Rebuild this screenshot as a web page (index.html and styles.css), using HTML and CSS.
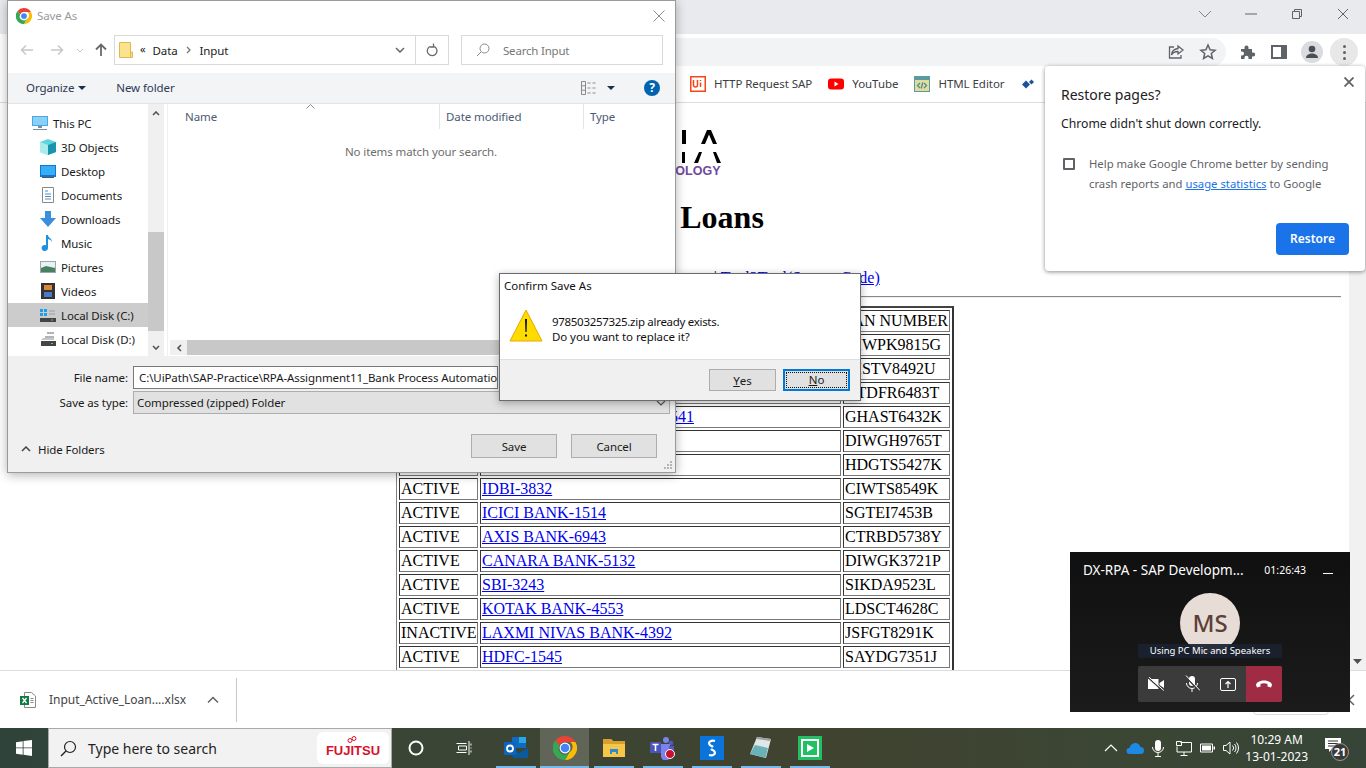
FILE: index.html
```html
<!DOCTYPE html>
<html>
  <head>
    <title>Active Loans</title>
    <link rel="stylesheet" href="styles.css">
  </head>
  <body>
    <div class="tabstrip">
      <svg class="winctl" width="16" height="16" viewBox="0 0 16 16"><path d="M2 5l6 6 6-6" fill="none" stroke="#80868b"/></svg>
      <svg class="winctl" width="16" height="16" viewBox="0 0 16 16"><path d="M2 8h12" stroke="#5f6368"/></svg>
      <svg class="winctl" width="16" height="16" viewBox="0 0 16 16"><path d="M3.500 5.500h7v7h-7zM5.500 5V3.500h7v7H11" fill="none" stroke="#5f6368"/></svg>
      <svg class="winctl" width="16" height="16" viewBox="0 0 16 16"><path d="M3 3l10 10M13 3L3 13" stroke="#5f6368"/></svg>
    </div>

    <div class="toolbar">
      <div class="omnibox">
        <svg width="18" height="18" viewBox="0 0 18 18"><path d="M11 3l5 4-5 4V8.500C7 8.500 5.500 10 4.500 12c.2-3.500 2.500-6 6.500-6.500zM7 4H2.500v11H14v-3" fill="none" stroke="#5f6368" stroke-width="1.300"/></svg>
        <svg width="18" height="18" viewBox="0 0 18 18"><path d="M9 2l2.100 4.700 5 .5-3.800 3.300 1.100 5L9 12.900l-4.400 2.600 1.100-5L1.900 7.200l5-.5z" fill="none" stroke="#5f6368" stroke-width="1.500"/></svg>
      </div>
      <div class="toolbar-icons">
        <svg width="18" height="18" viewBox="0 0 18 18"><path d="M2 6h3.500V4.500a2 2 0 014 0V6H13v3.500h1.200a2 2 0 010 4H13V16H9.500v-1.200a2 2 0 00-4 0V16H2v-3.500h1a2 2 0 000-4H2z" fill="#5f6368"/></svg>
        <svg width="16" height="14" viewBox="0 0 16 14"><path d="M1 1h14v12H1z" fill="#fff" stroke="#5f6368" stroke-width="2"/><path d="M10 1h5v12h-5z" fill="#5f6368"/></svg>
        <span class="avatar">
          <svg width="14" height="14" viewBox="0 0 14 14"><circle cx="7" cy="4" r="3.300" fill="#4a4f57"/><path d="M1 13c0-3 3-4.500 6-4.500s6 1.500 6 4.500z" fill="#4a4f57"/></svg>
        </span>
        <span class="menu-btn"><i></i><i></i><i></i></span>
      </div>
    </div>

    <div class="bookmarks">
      <a class="mark">
        <svg width="16" height="16" viewBox="0 0 16 16"><path d="M0 0h16v16H0z" fill="#fa4616"/><path d="M1.500 1.500h13v13h-13z" fill="#fff"/><path d="M3.500 4v5a2 2 0 004 0V4M10.500 4v1M10.500 6.500V11" fill="none" stroke="#fa4616" stroke-width="1.500"/></svg>
        HTTP Request SAP
      </a>
      <a class="mark">
        <svg width="16" height="16" viewBox="0 0 16 16"><rect y="2.500" width="16" height="11" rx="3" fill="#f00"/><path d="M6.500 5.500l4 2.500-4 2.500z" fill="#fff"/></svg>
        YouTube
      </a>
      <a class="mark">
        <svg width="16" height="16" viewBox="0 0 16 16"><path d="M0 0h16v16H0z" fill="#5b9aa0"/><path d="M1 4h14v11H1z" fill="#e2dc9c"/><path d="M6 7L3.500 9.500 6 12M10 7l2.500 2.500L10 12M8.800 6.500l-1.600 6" fill="none" stroke="#4e8f91" stroke-width="1.300"/></svg>
        HTML Editor
      </a>
      <svg width="14" height="14" viewBox="0 0 14 14"><path d="M5 3.500L9 7.500 5 11.500 1 7.500z" fill="#1c4f9c"/><path d="M10.500 2.500l2.500 2.500-2.500 2.500L8 5z" fill="#1c4f9c"/></svg>
    </div>

    <div class="viewport">
      <div class="page">
        <div class="logo">
          <svg width="92" height="33" viewBox="0 0 92 33">
            <path d="M53 0h4v14h-4zM72 14l6-14h4l6 14h-4l-4-9.500-4 9.500z" fill="#000"/>
            <path d="M53 22h3v11h-3zM65 33l5-11h3l-4 11zM84 22h3l5 11h-4z" fill="#000"/>
          </svg>
          <div class="logo-sub">TECHNOLOGY</div>
        </div>
        <h1>Active Loans</h1>
        <div class="links"><a>Home</a> | <a>Documentation</a> | <a>Test Datasets</a> | <a>Tool2Tool(Source Code)</a></div>
        <hr>
        <table class="loans">
          <tr><td class="c-status">STATUS</td><td class="c-name">BANK</td><td class="c-pan">PAN NUMBER</td></tr>
          <tr><td>ACTIVE</td><td><a>SBI-8241</a></td><td>DIWPK9815G</td></tr>
          <tr><td>ACTIVE</td><td><a>PNB-2241</a></td><td>DISTV8492U</td></tr>
          <tr><td>ACTIVE</td><td><a>HDFC-7719</a></td><td>DTDFR6483T</td></tr>
          <tr><td>ACTIVE</td><td><a>UNION BANK OF INDIA-6541</a></td><td>GHAST6432K</td></tr>
          <tr><td>ACTIVE</td><td><a>YES BANK-2207</a></td><td>DIWGH9765T</td></tr>
          <tr><td>ACTIVE</td><td><a>UCO BANK-6183</a></td><td>HDGTS5427K</td></tr>
          <tr><td>ACTIVE</td><td><a>IDBI-3832</a></td><td>CIWTS8549K</td></tr>
          <tr><td>ACTIVE</td><td><a>ICICI BANK-1514</a></td><td>SGTEI7453B</td></tr>
          <tr><td>ACTIVE</td><td><a>AXIS BANK-6943</a></td><td>CTRBD5738Y</td></tr>
          <tr><td>ACTIVE</td><td><a>CANARA BANK-5132</a></td><td>DIWGK3721P</td></tr>
          <tr><td>ACTIVE</td><td><a>SBI-3243</a></td><td>SIKDA9523L</td></tr>
          <tr><td>ACTIVE</td><td><a>KOTAK BANK-4553</a></td><td>LDSCT4628C</td></tr>
          <tr><td>INACTIVE</td><td><a>LAXMI NIVAS BANK-4392</a></td><td>JSFGT8291K</td></tr>
          <tr><td>ACTIVE</td><td><a>HDFC-1545</a></td><td>SAYDG7351J</td></tr>
          <tr><td>ACTIVE</td><td><a>IDBI-7021</a></td><td>KLMNO4412R</td></tr>
        </table>
      </div>
      <div class="page-scroll">
        <svg width="9" height="5" viewBox="0 0 9 5"><path d="M0 0h9L4.500 5z" fill="#505050"/></svg>
      </div>
    </div>

    <div class="shelf">
      <div class="shelf-item">
        <svg width="16" height="16" viewBox="0 0 16 16"><path d="M4.500 .5h7l4 3.500v11.500h-11z" fill="#fff" stroke="#8a8a8a"/><path d="M0 4h9v9H0z" fill="#107c41"/><path d="M2.500 6l4 5M6.500 6l-4 5" stroke="#fff" stroke-width="1.300"/><path d="M10.500 6.500h3M10.500 8.500h3M10.500 10.500h3" stroke="#8a8a8a"/></svg>
        <span class="shelf-name">Input_Active_Loan....xlsx</span>
        <svg width="12" height="8" viewBox="0 0 12 8"><path d="M1 6.500l5-5 5 5" fill="none" stroke="#5f6368" stroke-width="1.500"/></svg>
      </div>
      <div class="shelf-right">
        <span class="show-all"></span>
        <svg width="12" height="12" viewBox="0 0 12 12"><path d="M1 1l10 10M11 1L1 11" stroke="#5f6368" stroke-width="1.500"/></svg>
      </div>
    </div>

    <div class="taskbar">
      <div class="start">
        <svg width="16" height="16" viewBox="0 0 16 16"><path d="M0 2.200l6.700-1V7.500H0zM7.500 1.100L16 0v7.500H7.500zM0 8.300h6.700v6.500l-6.700-1zM7.500 8.300H16V16l-8.500-1.200z" fill="#fff"/></svg>
      </div>
      <div class="task-search">
        <svg width="17" height="17" viewBox="0 0 17 17"><circle cx="10" cy="7" r="5.500" fill="none" stroke="#222" stroke-width="1.200"/><path d="M6 11l-5 5" stroke="#222" stroke-width="1.400"/></svg>
        <span class="task-search-text">Type here to search</span>
        <span class="fujitsu">
          <svg class="fujitsu-loop" width="10" height="7" viewBox="0 0 10 7"><circle cx="3" cy="4.500" r="2" fill="none" stroke="#d8102c"/><circle cx="7" cy="2.500" r="2" fill="none" stroke="#d8102c"/></svg>
          FUJITSU
        </span>
      </div>
      <div class="task-btn"><svg width="16" height="16" viewBox="0 0 16 16"><circle cx="8" cy="8" r="6.500" fill="none" stroke="#fff" stroke-width="2"/></svg></div>
      <div class="task-btn"><svg width="16" height="16" viewBox="0 0 16 16"><path d="M.5 3.500h10M.5 12.500h10M2.500 6h8v4h-8z" fill="none" stroke="#fff"/><path d="M13 1v14M15 3.500v2M15 7.500v1M15 10.500v2" stroke="#fff"/></svg></div>
      <div class="apps">
        <div class="app">
          <svg width="24" height="24" viewBox="0 0 24 24"><path d="M8 1h14v11H8z" fill="#0f6cbd"/><path d="M15 1h7v6h-7z" fill="#28a8ea"/><path d="M8 12l7 5 9-5v10H9z" fill="#0a5aa0"/><path d="M0 6h12v13H0z" fill="#0a64c0"/><circle cx="6" cy="12.500" r="3" fill="none" stroke="#fff" stroke-width="1.800"/></svg>
        </div>
        <div class="app app-active">
          <svg width="24" height="24" viewBox="0 0 24 24">
            <path d="M12 0a12 12 0 0110.400 6H12a6 6 0 00-5.600 3.700L2.400 4.400A12 12 0 0112 0z" fill="#ea4335"/>
            <path d="M22.400 6A12 12 0 0112 24l4.600-8a6 6 0 00.600-10z" fill="#fbbc04"/>
            <path d="M2.400 4.400A12 12 0 0012 24l4.600-8a6 6 0 01-10.200-6.300z" fill="#34a853"/>
            <circle cx="12" cy="12" r="5.400" fill="#fff"/><circle cx="12" cy="12" r="4.300" fill="#4285f4"/>
          </svg>
        </div>
        <div class="app">
          <svg width="24" height="22" viewBox="0 0 24 22"><path d="M1 2h8l2 2h12v16H1z" fill="#f5c648"/><path d="M1 2h8l2 2h12v3H1z" fill="#d69f2e"/><path d="M8 12h8v5h-2v-2h-4v2H8z" fill="#2f88d0"/></svg>
        </div>
        <div class="app">
          <svg width="26" height="24" viewBox="0 0 26 24"><circle cx="16" cy="4" r="3" fill="#7b83eb"/><circle cx="21" cy="7" r="2.300" fill="#5059c9"/><path d="M11 8h9v12a4 4 0 01-9 0z" fill="#7b83eb"/><path d="M19 10h5v7h-5z" fill="#5059c9"/><path d="M0 6h11v11H0z" fill="#4b53bc"/><path d="M2.500 8.500h6M5.500 8.500V15" stroke="#fff" stroke-width="1.600"/><circle cx="20" cy="18" r="4.500" fill="#c4122f" stroke="#fff"/></svg>
        </div>
        <div class="app">
          <svg width="24" height="24" viewBox="0 0 24 24"><path d="M0 0h24v24H0z" fill="#0a74da"/><path d="M15 5c-4-1-7 1-5.500 3.500.8 1.300 2.500 1.500 3.500 2.500M9 19c4 1 7-1 5.500-3.500-.8-1.300-2.500-1.500-3.500-2.500" fill="none" stroke="#fff" stroke-width="2.200"/></svg>
        </div>
        <div class="app">
          <svg width="24" height="24" viewBox="0 0 24 24"><path d="M8 1l14 2-5 19L1 18z" fill="#dfe7e8"/><path d="M6 9l13 3-2.500 10L1 18z" fill="#6ab2b8"/><path d="M8 1l14 2-.5 2L7.500 3z" fill="#9e9e9e"/></svg>
        </div>
        <div class="app">
          <svg width="24" height="24" viewBox="0 0 24 24"><path d="M0 0h24v24H0z" fill="#21c063"/><path d="M3 3h18v18H3z" fill="#fff"/><path d="M5 5h14v14H5z" fill="#21c063"/><path d="M9 8l7 4-7 4z" fill="#fff"/></svg>
        </div>
      </div>
      <div class="tray">
        <svg width="14" height="14" viewBox="0 0 14 14"><path d="M1 10l6-6 6 6" fill="none" stroke="#fff" stroke-width="1.200"/></svg>
        <svg width="18" height="12" viewBox="0 0 18 12"><path d="M3.500 12a3 3 0 010-6c.5-3 3-5 6-5 2.500 0 4 1.500 5 4a3.500 3.500 0 010 7z" fill="#1e88e5"/></svg>
        <svg class="tray-mic" width="12" height="17" viewBox="0 0 12 17"><rect x="3" y="0" width="6" height="11" rx="3" fill="#fff"/><path d="M.5 7a5.500 5.500 0 0011 0M6 13v3M3 16.500h6" fill="none" stroke="#fff"/></svg>
        <svg width="16" height="15" viewBox="0 0 16 15"><path d="M4.500 1.500H15.500V11H1V5.500M8 11v3M4.500 14.500h7" fill="none" stroke="#fff"/><path d="M.5.500h5v4h-5z" fill="none" stroke="#fff"/></svg>
        <svg width="15" height="10" viewBox="0 0 15 10"><path d="M.5 1h12v8H.5z" fill="none" stroke="#fff"/><path d="M2 2.500h9v5H2zM13.500 3.500H15v3h-1.500z" fill="#fff"/></svg>
        <svg width="17" height="14" viewBox="0 0 17 14"><path d="M.5 4.500h2.500L7 1v12L3 9.500H.5zM9.500 4.500a3.500 3.500 0 010 5M11.500 3a6 6 0 010 8M13.500 1.500a8.500 8.500 0 010 11" fill="none" stroke="#fff"/></svg>
        <div class="clock"><span>10:29 AM</span><span>13-01-2023</span></div>
        <div class="notify">
          <svg width="16" height="14" viewBox="0 0 16 14"><path d="M0 0h16v11H7l-3 3v-3H0z" fill="#fff"/><path d="M3 3h10M3 5.500h10M3 8h7" stroke="#333"/></svg>
          <span class="notify-count">21</span>
        </div>
      </div>
    </div>

    <div class="save-as">
      <div class="dlg-title">
        <svg width="16" height="16" viewBox="0 0 24 24">
          <path d="M12 0a12 12 0 0110.400 6H12a6 6 0 00-5.600 3.700L2.400 4.400A12 12 0 0112 0z" fill="#ea4335"/>
          <path d="M22.400 6A12 12 0 0112 24l4.600-8a6 6 0 00.600-10z" fill="#fbbc04"/>
          <path d="M2.400 4.400A12 12 0 0012 24l4.600-8a6 6 0 01-10.200-6.300z" fill="#34a853"/>
          <circle cx="12" cy="12" r="5.400" fill="#fff"/><circle cx="12" cy="12" r="4.300" fill="#4285f4"/>
        </svg>
        <span class="dlg-title-text">Save As</span>
        <svg class="dlg-close" width="12" height="12" viewBox="0 0 12 12"><path d="M.5.500l11 11M11.500.500l-11 11" stroke="#8a8a8a"/></svg>
      </div>

      <div class="nav-row">
        <div class="nav-arrows">
          <svg width="14" height="12" viewBox="0 0 14 12"><path d="M13 6H1.500M6 1.500L1.500 6 6 10.500" fill="none" stroke="#c8c8c8" stroke-width="1.500"/></svg>
          <svg width="14" height="12" viewBox="0 0 14 12"><path d="M1 6h11.500M8 1.500L12.500 6 8 10.500" fill="none" stroke="#c8c8c8" stroke-width="1.500"/></svg>
          <svg width="8" height="5" viewBox="0 0 8 5"><path d="M1 1l3 3 3-3" fill="none" stroke="#c8c8c8"/></svg>
          <svg width="12" height="14" viewBox="0 0 12 14"><path d="M6 13V1.500M1 6.500l5-5 5 5" fill="none" stroke="#6a6a6a" stroke-width="1.800"/></svg>
        </div>
        <div class="addr">
          <svg width="14" height="16" viewBox="0 0 14 16"><path d="M.5.500h11v15H.5z" fill="#fbe38e" stroke="#e0b84c"/><path d="M11.500 10h2v5.500h-2z" fill="#fbe38e" stroke="#e0b84c"/></svg>
          <span class="addr-quote">«</span>
          <span>Data</span>
          <svg width="6" height="8" viewBox="0 0 6 8"><path d="M1 1l3 3-3 3" fill="none" stroke="#777" stroke-width="1.300"/></svg>
          <span>Input</span>
          <svg class="addr-drop" width="10" height="6" viewBox="0 0 10 6"><path d="M1 1l4 4 4-4" fill="none" stroke="#666" stroke-width="1.500"/></svg>
          <span class="addr-refresh">
            <svg width="12" height="14" viewBox="0 0 12 14"><path d="M4 3.500a4.800 4.800 0 103.800-.2M7.500 .5v3.500H4" fill="none" stroke="#6a6a6a" stroke-width="1.300"/></svg>
          </span>
        </div>
        <div class="search-box">
          <svg width="14" height="14" viewBox="0 0 14 14"><circle cx="8.500" cy="5.500" r="4.500" fill="none" stroke="#8a8a8a"/><path d="M5 9l-4 4" stroke="#8a8a8a"/></svg>
          <span>Search Input</span>
        </div>
      </div>

      <div class="cmd-row">
        <span class="cmd">Organize <svg width="8" height="4" viewBox="0 0 8 4"><path d="M0 0h8L4 4z" fill="#1e2c50"/></svg></span>
        <span class="cmd cmd-new">New folder</span>
        <svg class="view-ico" width="16" height="14" viewBox="0 0 16 14"><path d="M.5.500h4v13h-4zM.5 4.800h4M.5 9.200h4M6.500 2h3M11.500 2h3M6.500 7h3M11.500 7h3M6.500 12h3M11.500 12h3" fill="none" stroke="#8a8a8a"/></svg>
        <svg width="8" height="4" viewBox="0 0 8 4"><path d="M0 0h8L4 4z" fill="#1e2c50"/></svg>
        <span class="help">?</span>
      </div>

      <div class="browse">
        <div class="tree">
          <div class="tree-item tree-root">
            <svg width="16" height="14" viewBox="0 0 16 14"><path d="M0 0h16v10H0z" fill="#4aa8e8"/><path d="M1 1h14v8H1z" fill="#8ad0f8"/><path d="M6 10h4v2H6zM1 13h14v1H1z" fill="#7a8ea0"/></svg>
            This PC
          </div>
          <div class="tree-item">
            <svg width="16" height="16" viewBox="0 0 16 16"><path d="M8 0l8 3v10l-8 3-8-3V3z" fill="#5dd5e0"/><path d="M8 6l8-3v10l-8 3z" fill="#1a94ad"/><path d="M0 3l8 3v10l-8-3z" fill="#a8ecf0"/></svg>
            3D Objects
          </div>
          <div class="tree-item">
            <svg width="16" height="13" viewBox="0 0 16 13"><path d="M0 0h16v12H0z" fill="#0c78d8"/><path d="M1 1h14v9H1z" fill="#3aaef5"/><path d="M2 12h12v1H2z" fill="#555"/></svg>
            Desktop
          </div>
          <div class="tree-item">
            <svg width="16" height="16" viewBox="0 0 16 16"><path d="M2.500.5h11v15h-11z" fill="#fff" stroke="#888"/><path d="M5 4h3M5 7h6M5 9.500h6M5 12h6" stroke="#4a90c8"/></svg>
            Documents
          </div>
          <div class="tree-item">
            <svg width="16" height="16" viewBox="0 0 16 16"><path d="M5 0h6v7h5l-8 9-8-9h5z" fill="#3a8fdc"/></svg>
            Downloads
          </div>
          <div class="tree-item">
            <svg width="16" height="16" viewBox="0 0 16 16"><path d="M6 0h2c0 3 4 3 4 7-1-2-2-2.500-4-3v9a3.200 3 0 11-2-2.800z" fill="#1e90e0"/></svg>
            Music
          </div>
          <div class="tree-item">
            <svg width="16" height="12" viewBox="0 0 16 12"><path d="M0 0h16v12H0z" fill="#9aa8ae"/><path d="M1 1h14v10H1z" fill="#e8f2f5"/><path d="M1 7l5-2 9 2v4H1z" fill="#4a8060"/></svg>
            Pictures
          </div>
          <div class="tree-item">
            <svg width="16" height="16" viewBox="0 0 16 16"><path d="M1 0h14v16H1z" fill="#333"/><path d="M4 2h8v5H4z" fill="#d88a3a"/><path d="M4 9h8v5H4z" fill="#4a7ac0"/></svg>
            Videos
          </div>
          <div class="tree-item tree-selected">
            <svg width="16" height="16" viewBox="0 0 16 16"><path d="M0 2h3v3H0zM4 2h3v3H4zM0 6h3v3H0zM4 6h3v3H4z" fill="#1ea0e8"/><path d="M9 4h6M9 7h6" stroke="#9aa0a4"/><path d="M0 11h16v4H0z" fill="#444"/><path d="M11 12.500h2v1h-2z" fill="#5fd05f"/></svg>
            Local Disk (C:)
          </div>
          <div class="tree-item">
            <svg width="16" height="16" viewBox="0 0 16 16"><path d="M7 1h7v2h-7zM5 5h9v2H5z" fill="#b0b4b8"/><path d="M1 9l2-2h11v2z" fill="#c4c8cc"/><path d="M1 10h15v5H1z" fill="#444"/><path d="M11 12h2v1h-2z" fill="#5fd05f"/></svg>
            Local Disk (D:)
          </div>
        </div>
        <div class="tree-scroll">
          <svg width="8" height="5" viewBox="0 0 8 5"><path d="M1 4l3-3 3 3" fill="none" stroke="#555" stroke-width="1.600"/></svg>
          <span class="tree-track"><span class="tree-thumb"></span></span>
          <svg width="8" height="5" viewBox="0 0 8 5"><path d="M1 1l3 3 3-3" fill="none" stroke="#555" stroke-width="1.600"/></svg>
        </div>
        <div class="list">
          <span class="sort-caret">
            <svg width="9" height="5" viewBox="0 0 9 5"><path d="M.5 4.500l4-4 4 4" fill="none" stroke="#8a8a8a"/></svg>
          </span>
          <div class="list-head">
            <span class="col col-name">Name</span>
            <span class="col col-date">Date modified</span>
            <span class="col col-type">Type</span>
          </div>
          <div class="list-empty">No items match your search.</div>
          <div class="list-scroll">
            <svg width="6" height="8" viewBox="0 0 6 8"><path d="M5 1L2 4l3 3" fill="none" stroke="#555" stroke-width="1.600"/></svg>
            <span class="list-thumb"></span>
          </div>
        </div>
      </div>

      <div class="save-form">
        <div class="form-row">
          <label>File name:</label>
          <div class="file-input">C:\UiPath\SAP-Practice\RPA-Assignment11_Bank Process Automation\Data\Input\978503257325.zip</div>
        </div>
        <div class="form-row">
          <label>Save as type:</label>
          <div class="type-select">
            Compressed (zipped) Folder
            <svg width="10" height="6" viewBox="0 0 10 6"><path d="M1 1l4 4 4-4" fill="none" stroke="#555" stroke-width="1.200"/></svg>
          </div>
        </div>
        <div class="form-foot">
          <span class="hide-folders">
            <svg width="10" height="6" viewBox="0 0 10 6"><path d="M1 5l4-4 4 4" fill="none" stroke="#444" stroke-width="1.500"/></svg>
            Hide Folders
          </span>
          <span class="win-btn save-btn">Save</span>
          <span class="win-btn cancel-btn">Cancel</span>
          <svg class="grip" width="9" height="9" viewBox="0 0 9 9"><path d="M6 0h2v2H6zM3 3h2v2H3zM6 3h2v2H6zM0 6h2v2H0zM3 6h2v2H3zM6 6h2v2H6z" fill="#b5b5b5"/></svg>
        </div>
      </div>
    </div>

    <div class="confirm">
      <div class="confirm-title">Confirm Save As</div>
      <div class="confirm-body">
        <svg width="34" height="34" viewBox="0 0 34 34"><path d="M17 2l16 31H1z" fill="#ffdc00" stroke="#e8a800"/><path d="M16 11h2l-.4 13h-1.200zM16 26.500h2v2h-2z" fill="#111"/></svg>
        <div class="confirm-msg">
          <div class="msg-file">978503257325.zip already exists.</div>
          <div>Do you want to replace it?</div>
        </div>
      </div>
      <div class="confirm-foot">
        <span class="win-btn yes-btn"><u>Y</u>es</span>
        <span class="win-btn no-btn"><span class="no-inner"><u>N</u>o</span></span>
      </div>
    </div>

    <div class="restore">
      <svg class="restore-close" width="10" height="10" viewBox="0 0 10 10"><path d="M.5.500l9 9M9.500.500l-9 9" stroke="#5f6368" stroke-width="1.800"/></svg>
      <div class="restore-title">Restore pages?</div>
      <div class="restore-sub">Chrome didn't shut down correctly.</div>
      <div class="restore-check">
        <span class="checkbox"></span>
        <div class="restore-help">Help make Google Chrome better by sending crash reports and <a>usage statistics</a> to Google</div>
      </div>
      <div class="restore-foot"><span class="restore-btn">Restore</span></div>
    </div>

    <div class="meeting">
      <div class="meeting-head">
        <span class="meeting-name">DX-RPA - SAP Developm...</span>
        <span class="meeting-time">01:26:43</span>
        <span class="meeting-min"></span>
      </div>
      <div class="meeting-avatar">MS</div>
      <div class="meeting-audio">Using PC Mic and Speakers</div>
      <div class="meeting-ctrls">
        <span class="ctrl"><svg width="18" height="14" viewBox="0 0 18 14"><path d="M1 2h10.500v10H1zM12.500 6L17 3v8l-4.500-3z" fill="#fff"/><path d="M1 .5L16 14" stroke="#3b3b3b" stroke-width="1.500"/><path d="M1.800 0L16.800 13.500" stroke="#fff"/></svg></span>
        <span class="ctrl"><svg width="16" height="18" viewBox="0 0 16 18"><rect x="5" y="1" width="6" height="10" rx="3" fill="#fff"/><path d="M2.500 8a5.500 5.500 0 0011 0M8 13.500V17" fill="none" stroke="#fff"/><path d="M1 1l14 15" stroke="#3b3b3b" stroke-width="1.500"/><path d="M2 .5l14 15" stroke="#fff"/></svg></span>
        <span class="ctrl"><svg width="16" height="13" viewBox="0 0 16 13"><rect x=".5" y=".5" width="15" height="12" rx="1.500" fill="none" stroke="#fff"/><path d="M8 10V3.500M5.500 6L8 3.500 10.500 6" fill="none" stroke="#fff" stroke-width="1.200"/></svg></span>
        <span class="ctrl ctrl-end"><svg width="16" height="8" viewBox="0 0 16 8"><path d="M0 5c1-6 15-6 16 0l-1 2.500-3.500-1V4c-2-1-5-1-7 0v2.500L1 7.500z" fill="#fff"/></svg></span>
      </div>
    </div>
  </body>
</html>
```

FILE: styles.css
```css
* {
  box-sizing: border-box;
}
html, body {
  margin: 0;
  padding: 0;
  height: 768px;
  overflow: hidden;
}
body {
  display: flex;
  flex-direction: column;
  font-family: "Noto Sans", "Open Sans", sans-serif;
  font-size: 11.5px;
  color: #1a1a1a;
  background: #fff;
}
svg {
  display: block;
  flex: none;
}

/* chrome top */
.tabstrip {
  height: 34px;
  flex: none;
  background: #e8eaed;
  display: flex;
  align-items: center;
  justify-content: flex-end;
  gap: 30px;
  padding: 0 15px 6px 0;
}
.toolbar {
  height: 32px;
  flex: none;
  background: #fff;
  padding: 4px 8px 0 0;
  display: flex;
}
.omnibox {
  margin-left: 676px;
  width: 550px;
  height: 28px;
  background: #f1f3f4;
  border-radius: 0 14px 14px 0;
  display: flex;
  align-items: center;
  justify-content: flex-end;
  gap: 14px;
  padding-right: 9px;
}
.toolbar-icons {
  display: flex;
  align-items: center;
  gap: 0;
  flex: 1;
  justify-content: flex-end;
  height: 28px;
}
.toolbar-icons > svg:nth-child(1) {
  margin-right: 14px;
}
.toolbar-icons > svg:nth-child(2) {
  margin-right: 14px;
}
.avatar {
  width: 22px;
  height: 22px;
  margin-right: 7px;
  border-radius: 50%;
  background: #dadce0;
  display: flex;
  align-items: center;
  justify-content: center;
}
.menu-btn {
  width: 28px;
  height: 28px;
  border-radius: 50%;
  background: #e8e8e8;
  display: flex;
  flex-direction: column;
  align-items: center;
  justify-content: center;
  gap: 3px;
}
.menu-btn i {
  width: 3px;
  height: 3px;
  border-radius: 50%;
  background: #5f6368;
}

.bookmarks {
  height: 37px;
  flex: none;
  background: #fff;
  border-bottom: 1px solid #dadce0;
  display: flex;
  align-items: center;
  padding-left: 690px;
  padding-bottom: 1px;
  gap: 16px;
  color: #3c4043;
  letter-spacing: -0.05px;
}
.mark {
  display: flex;
  align-items: center;
  gap: 8px;
}

/* web page */
.viewport {
  flex: 1;
  min-height: 0;
  display: flex;
  overflow: hidden;
}
.page {
  flex: 1;
  min-width: 0;
  padding: 27px 8px 0;
  font-family: "Liberation Serif", serif;
  font-size: 16px;
  color: #000;
  text-align: center;
}
.page a {
  color: #00e;
  text-decoration: underline;
}
.logo {
  width: 92px;
  margin: 0 auto;
  text-align: right;
}
.logo-sub {
  font-family: "Liberation Sans", sans-serif;
  font-weight: bold;
  font-size: 12.5px;
  line-height: 14px;
  color: #6f4a9c;
  margin-top: 1px;
  white-space: nowrap;
  direction: rtl;
}
h1 {
  font-size: 32px;
  line-height: 36px;
  margin: 21px 0 0;
}
.links {
  margin-top: 34px;
  padding-right: 4px;
  line-height: 18px;
  white-space: nowrap;
}
hr {
  margin: 9px 0 8px;
  border: 0;
  border-top: 1px solid #888;
  border-bottom: 1px solid #eee;
}
table.loans {
  margin: 0 0 0 388px;
  width: 558px;
  table-layout: fixed;
  border-collapse: separate;
  border-spacing: 2px;
  border-style: solid;
  border-width: 2px 2px 1px 1px;
  border-color: #444 #333 #888 #808080;
  text-align: left;
  line-height: 18px;
}
.loans td {
  padding: 1px;
  border: 1px solid;
  border-color: #333 #777 #777 #333;
  white-space: nowrap;
}
.c-status {
  width: 79px;
}
.c-name {
  width: 361px;
}
.c-pan {
  width: 107px;
}
.page-scroll {
  width: 17px;
  flex: none;
  background: #f1f1f1;
  display: flex;
  align-items: flex-end;
  justify-content: center;
  padding-bottom: 6px;
}

/* download shelf */
.shelf {
  height: 58px;
  flex: none;
  background: #fff;
  border-top: 1px solid #dadce0;
  display: flex;
  align-items: center;
  justify-content: space-between;
  padding-left: 20px;
  padding-right: 11px;
}
.shelf-item {
  display: flex;
  align-items: center;
  height: 44px;
  width: 217px;
  border-right: 1px solid #c8c8c8;
  color: #444;
}
.shelf-name {
  margin-left: 13px;
  width: 158px;
  font-size: 12px;
  white-space: nowrap;
}
.shelf-right {
  display: flex;
  align-items: center;
  gap: 14px;
}
.show-all {
  width: 76px;
  height: 28px;
  margin-top: 2px;
  border: 1px solid #dadce0;
  border-radius: 4px;
}

/* taskbar */
.taskbar {
  height: 40px;
  flex: none;
  display: flex;
  align-items: stretch;
  background: linear-gradient(90deg, #2f433a 0, #3a4536 400px, #40432f 800px, #3c4634 1100px, #364537 100%);
  color: #fff;
}
.start {
  width: 48px;
  display: flex;
  align-items: center;
  justify-content: center;
}
.task-search {
  width: 344px;
  background: #f2f2f2;
  border: 1px solid #a9a9a9;
  display: flex;
  align-items: center;
  padding: 0 2px 0 11px;
  color: #1f1f1f;
}
.task-search-text {
  font-size: 14px;
  margin-left: 11px;
  flex: 1;
}
.fujitsu {
  position: relative;
  width: 72px;
  height: 32px;
  padding-top: 4px;
  background: #fff;
  border-radius: 6px;
  color: #d8102c;
  font-family: "Liberation Sans", sans-serif;
  font-weight: bold;
  font-size: 13px;
  display: flex;
  align-items: center;
  justify-content: center;
}
.fujitsu-loop {
  position: absolute;
  left: 30px;
  top: 4px;
}
.task-btn {
  width: 48px;
  display: flex;
  align-items: center;
  justify-content: center;
}
.apps {
  display: flex;
  margin-left: 3px;
  gap: 0;
}
.app {
  width: 49px;
  display: flex;
  align-items: center;
  justify-content: center;
  position: relative;
}
.app::after {
  content: "";
  position: absolute;
  left: 5px;
  right: 4px;
  bottom: 0;
  height: 2px;
  background: #76b9ed;
}
.app-active {
  background: #616558;
}
.app-active::after {
  left: 0;
  right: 0;
}
.tray {
  flex: 1;
  display: flex;
  align-items: center;
  justify-content: flex-end;
  gap: 8px;
  padding-right: 17px;
}
.tray-mic {
  margin-right: 4px;
}
.clock {
  display: flex;
  flex-direction: column;
  align-items: center;
  font-size: 12px;
  line-height: 17px;
  margin: 0 3px 0 -3px;
  white-space: nowrap;
}
.notify {
  position: relative;
  width: 30px;
  padding-left: 6px;
  margin-bottom: 6px;
}
.notify-count {
  position: absolute;
  left: 12px;
  top: 5px;
  width: 18px;
  height: 18px;
  border-radius: 50%;
  background: #3a3a3a;
  border: 1px solid #999;
  font-size: 11px;
  font-weight: bold;
  line-height: 16px;
  text-align: center;
}

/* save as dialog */
.save-as {
  position: absolute;
  left: 7px;
  top: 0;
  width: 669px;
  height: 473px;
  background: #fff;
  border: 1px solid #9a9a9a;
  box-shadow: 0 2px 10px rgba(0, 0, 0, 0.3);
  display: flex;
  flex-direction: column;
  letter-spacing: -0.1px;
}
.dlg-title {
  height: 29px;
  flex: none;
  display: flex;
  align-items: center;
  padding: 0 10px 0 8px;
}
.dlg-title-text {
  margin-left: 5px;
  flex: 1;
  color: #9a9a9a;
}
.nav-row {
  height: 43px;
  flex: none;
  display: flex;
  align-items: center;
  padding: 2px 12px 5px 12px;
}
.nav-arrows {
  width: 94px;
  display: flex;
  align-items: center;
}
.nav-arrows svg:nth-child(1) {
  margin-right: 16px;
}
.nav-arrows svg:nth-child(2) {
  margin-right: 12px;
}
.nav-arrows svg:nth-child(3) {
  margin-right: 11px;
}
.addr {
  width: 335px;
  height: 30px;
  border: 1px solid #d9d9d9;
  display: flex;
  align-items: center;
  padding-left: 4px;
  gap: 8px;
  color: #222;
}
.addr-quote {
  margin-left: -1px;
  margin-right: -1px;
  font-size: 11px;
  line-height: 11px;
  margin-top: -4px;
}
.addr-drop {
  margin-left: auto;
  margin-right: 2px;
}
.addr-refresh {
  width: 33px;
  height: 28px;
  border-left: 1px solid #d9d9d9;
  display: flex;
  align-items: center;
  justify-content: center;
}
.search-box {
  width: 202px;
  height: 30px;
  margin-left: 12px;
  border: 1px solid #d9d9d9;
  display: flex;
  align-items: center;
  padding-left: 14px;
  gap: 13px;
  color: #777;
  letter-spacing: -0.2px;
}
.cmd-row {
  height: 31px;
  flex: none;
  background: #f3f4f6;
  border-bottom: 1px solid #e3e3e3;
  display: flex;
  align-items: center;
  padding: 0 15px 1px 18px;
  color: #2b3a55;
}
.cmd {
  display: flex;
  align-items: center;
  gap: 4px;
}
.cmd-new {
  margin-left: 30px;
  flex: 1;
}
.view-ico {
  margin-right: 10px;
}
.help {
  width: 16px;
  height: 16px;
  margin-left: 29px;
  border-radius: 50%;
  background: #0063b1;
  color: #fff;
  font-weight: bold;
  font-size: 12px;
  line-height: 16px;
  text-align: center;
}
.browse {
  height: 252px;
  flex: none;
  display: flex;
  background: #fff;
}
.tree {
  width: 140px;
  flex: none;
  padding-top: 7px;
}
.tree-item {
  height: 24px;
  display: flex;
  align-items: center;
  gap: 5px;
  padding-left: 32px;
  color: #1a1a1a;
  white-space: nowrap;
}
.tree-root {
  padding-left: 24px;
}
.tree-selected {
  background: #ccc;
}
.tree-scroll {
  width: 16px;
  flex: none;
  background: #f0f0f0;
  margin-right: 3px;
  display: flex;
  flex-direction: column;
  align-items: center;
  padding: 7px 0 6px;
}
.tree-track {
  flex: 1;
  width: 100%;
  padding-top: 116px;
  padding-bottom: 14px;
  display: flex;
}
.tree-thumb {
  flex: 1;
  background: #c8c8c8;
}
.list {
  flex: 1;
  display: flex;
  flex-direction: column;
  position: relative;
  border-left: 1px solid #f0f0f0;
  color: #4c5a74;
}
.sort-caret {
  position: absolute;
  left: 138px;
  top: 0;
}
.list-head {
  height: 25px;
  flex: none;
  display: flex;
  align-items: center;
}
.col {
  height: 25px;
  line-height: 25px;
  padding-left: 6px;
}
.col-name {
  width: 271px;
  padding-left: 17px;
}
.col-date {
  width: 144px;
  border-left: 1px solid #e5e5e5;
}
.col-type {
  border-left: 1px solid #e5e5e5;
}
.list-empty {
  margin-top: 15px;
  text-align: center;
  color: #6d6d6d;
  height: 20px;
  padding-right: 1px;
}
.list-scroll {
  margin: auto 0 1px 2px;
  height: 15px;
  background: #f0f0f0;
  display: flex;
  align-items: center;
  padding-left: 6px;
  gap: 5px;
}
.list-thumb {
  flex: 1;
  height: 15px;
  background: #c8c8c8;
  margin-right: 120px;
}
.save-form {
  flex: 1;
  background: #f0f0f0;
  padding-top: 10px;
  display: flex;
  flex-direction: column;
}
.form-row {
  display: flex;
  align-items: center;
  margin-bottom: 2px;
  height: 23px;
}
.form-row label {
  width: 120px;
  text-align: right;
  margin-right: 5px;
  color: #1a1a1a;
}
.file-input {
  width: 365px;
  height: 23px;
  line-height: 21px;
  background: #fff;
  border: 1px solid #7a7a7a;
  padding-left: 5px;
  white-space: nowrap;
  overflow: hidden;
  color: #1a1a1a;
}
.type-select {
  width: 537px;
  height: 23px;
  background: #e1e1e1;
  border: 1px solid #adadad;
  padding: 0 3px;
  display: flex;
  align-items: center;
  justify-content: space-between;
  color: #1a1a1a;
}
.form-foot {
  flex: 1;
  display: flex;
  align-items: flex-start;
  position: relative;
  padding: 18px 18px 0 13px;
}
.hide-folders {
  display: flex;
  align-items: center;
  gap: 7px;
  height: 24px;
  margin-top: 3px;
  flex: 1;
}
.win-btn {
  background: #e1e1e1;
  border: 1px solid #adadad;
  display: flex;
  align-items: center;
  justify-content: center;
  color: #1a1a1a;
}
.save-btn, .cancel-btn {
  width: 86px;
  height: 24px;
}
.cancel-btn {
  margin-left: 14px;
}
.grip {
  position: absolute;
  right: 2px;
  bottom: 2px;
}

/* confirm dialog */
.confirm {
  position: absolute;
  left: 499px;
  top: 273px;
  width: 362px;
  height: 128px;
  background: #fff;
  border: 1px solid #6b6b6b;
  box-shadow: 0 2px 8px rgba(0, 0, 0, 0.3);
  display: flex;
  flex-direction: column;
}
.confirm-title {
  height: 24px;
  line-height: 24px;
  padding-left: 4px;
  color: #111;
}
.confirm-body {
  height: 61px;
  display: flex;
  padding: 10px 0 0 9px;
  gap: 9px;
}
.confirm-msg {
  line-height: 15px;
  padding-top: 6px;
  color: #111;
  letter-spacing: -0.08px;
}
.msg-file {
  letter-spacing: -0.3px;
}
.confirm-foot {
  flex: 1;
  background: #f0f0f0;
  border-top: 1px solid #dfdfdf;
  display: flex;
  justify-content: flex-end;
  align-items: flex-start;
  padding: 9px 10px 0 0;
  gap: 7px;
}
.yes-btn, .no-btn {
  width: 67px;
  height: 22px;
}
.no-btn {
  border: 2px solid #0078d7;
  padding: 1px;
}
.no-inner {
  width: 100%;
  height: 100%;
  outline: 1px dotted #111;
  outline-offset: -1px;
  text-align: center;
  line-height: 15px;
}

/* restore bubble */
.restore {
  position: absolute;
  left: 1045px;
  top: 66px;
  width: 320px;
  height: 205px;
  background: #fff;
  border-radius: 4px;
  box-shadow: 0 1px 4px rgba(0, 0, 0, 0.45);
  padding: 19px 16px 16px;
  color: #202124;
}
.restore-close {
  position: absolute;
  right: 11px;
  top: 11px;
}
.restore-title {
  font-size: 14px;
  line-height: 20px;
}
.restore-sub {
  font-size: 12.200px;
  line-height: 18px;
  margin-top: 10px;
}
.restore-check {
  display: flex;
  margin-top: 21px;
}
.checkbox {
  width: 12px;
  height: 12px;
  margin: 4px 14px 0 2px;
  border: 2px solid #5f6368;
  border-radius: 1px;
  flex: none;
}
.restore-help {
  font-size: 11.300px;
  line-height: 20px;
  color: #5f6368;
  width: 256px;
}
.restore-help a {
  color: #1a73e8;
  text-decoration: underline;
}
.restore-foot {
  display: flex;
  justify-content: flex-end;
  margin-top: 29px;
}
.restore-btn {
  width: 73px;
  height: 32px;
  background: #1a73e8;
  color: #fff;
  border-radius: 4px;
  font-weight: 600;
  font-size: 12px;
  line-height: 32px;
  text-align: center;
}

/* meeting mini window */
.meeting {
  position: absolute;
  left: 1070px;
  top: 552px;
  width: 280px;
  height: 160px;
  background: linear-gradient(180deg, #101010, #1b1b1b);
  color: #fff;
  display: flex;
  flex-direction: column;
  align-items: center;
}
.meeting-head {
  width: 100%;
  display: flex;
  align-items: center;
  height: 36px;
  padding: 0 17px 0 13px;
}
.meeting-name {
  font-size: 13.500px;
  flex: 1;
  white-space: nowrap;
}
.meeting-time {
  font-size: 10.500px;
  margin-right: 17px;
}
.meeting-min {
  width: 10px;
  height: 1px;
  margin-top: 6px;
  background: #fff;
}
.meeting-avatar {
  width: 60px;
  height: 60px;
  margin-top: 5px;
  border-radius: 50%;
  background: #e8dcd6;
  color: #5a4036;
  font-size: 24px;
  font-weight: 500;
  line-height: 60px;
  text-align: center;
}
.meeting-audio {
  width: 144px;
  height: 14px;
  margin-top: -9px;
  border-radius: 2px;
  background: rgba(27, 33, 48, 0.93);
  font-size: 9.500px;
  line-height: 14px;
  text-align: center;
  white-space: nowrap;
}
.meeting-ctrls {
  width: 144px;
  height: 36px;
  margin-top: 8px;
  border-radius: 2px;
  overflow: hidden;
  background: #3b3b3b;
  display: flex;
}
.ctrl {
  width: 36px;
  display: flex;
  align-items: center;
  justify-content: center;
}
.ctrl-end {
  background: #a02c43;
}
```
